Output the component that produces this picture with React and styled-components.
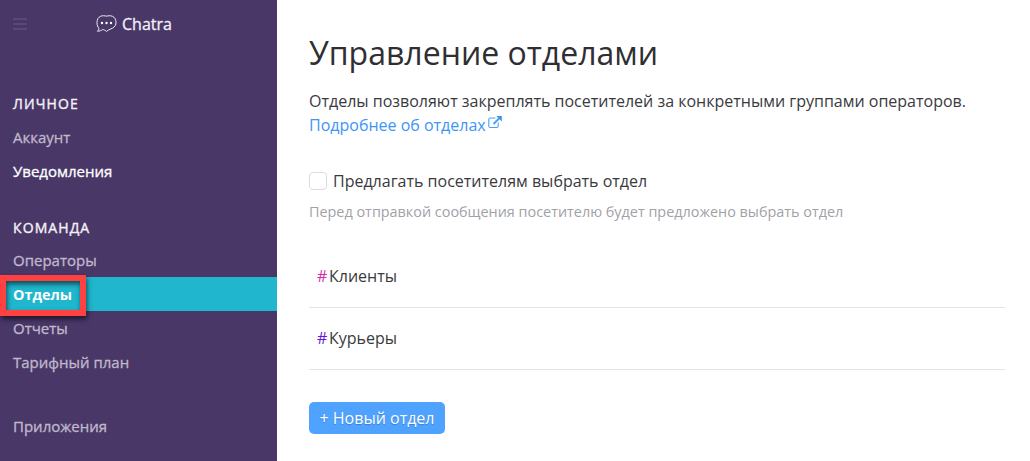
import React from 'react';
import styled, { createGlobalStyle } from 'styled-components';

const GlobalStyle = createGlobalStyle`
  * {
    box-sizing: border-box;
  }

  body {
    margin: 0;
    background: #fff;
    font-family: 'Open Sans', 'Noto Sans', sans-serif;
  }
`;

const Layout = styled.div`
  display: flex;
  height: 461px;
  overflow: hidden;
`;

const Sidebar = styled.aside`
  flex: none;
  width: 277px;
  background: #493768;
  color: #f3f0f6;
`;

const TopBar = styled.header`
  display: flex;
  align-items: center;
  height: 48px;
  padding-left: 13px;
`;

const MenuButton = styled.span`
  display: flex;
  flex-direction: column;
  gap: 3px;
  width: 14px;
  margin-right: 69px;
`;

const MenuLine = styled.i`
  height: 2px;
  background: #5a4876;
`;

const Brand = styled.span`
  margin-left: 5px;
  font-size: 16px;
  line-height: 24px;
  -webkit-text-stroke: 0.3px;
`;

const Group = styled.nav`
  padding-top: ${({ $top }) => $top}px;
`;

const GroupTitle = styled.h2`
  margin: 0;
  padding-left: 13px;
  height: 32.5px;
  font-size: 14px;
  line-height: 34px;
  font-weight: 400;
  letter-spacing: 1.1px;
  -webkit-text-stroke: 0.4px;
`;

const Item = styled.a`
  display: flex;
  align-items: center;
  height: 34px;
  padding-left: 13px;
  font-size: ${({ $active }) => ($active ? 14.4 : 15)}px;
  font-weight: ${({ $active }) => ($active ? 700 : 400)};
  color: ${({ $bright }) => ($bright ? '#fff' : '#c0b8cb')};
  background: ${({ $active }) => ($active ? '#20b6cd' : 'transparent')};
  -webkit-text-stroke: ${({ $active }) => ($active ? 0 : 0.3)}px;
`;

const Marked = styled.span`
  position: relative;
`;

const Highlight = styled.span`
  position: absolute;
  top: -10px;
  left: -13px;
  width: 86px;
  height: 41px;
  border: 6px solid #ff4141;
  box-shadow: 1px 3px 5px rgba(0, 0, 0, 0.6), inset 1px 3px 5px rgba(0, 0, 0, 0.6);
`;

const Main = styled.main`
  flex: 1;
  padding: 30px 25px 0 32px;
  color: #3a3a3e;
  font-size: 16px;
`;

const Title = styled.h1`
  margin: 0;
  font-size: 32px;
  line-height: 46px;
  font-weight: 400;
  color: #2f2f33;
`;

const Intro = styled.p`
  margin: 13px 0 0;
  line-height: 24px;
`;

const Link = styled.a`
  display: flex;
  width: max-content;
  color: #3d95f5;

  svg {
    margin: 3px 0 0 2px;
  }
`;

const CheckRow = styled.label`
  display: flex;
  align-items: center;
  gap: 6px;
  height: 24px;
  margin-top: 32px;
`;

const CheckBox = styled.span`
  width: 18px;
  height: 18px;
  border: 1px solid #dcdcde;
  border-radius: 4px;
`;

const Hint = styled.p`
  margin: 9px 0 0;
  font-size: 14.4px;
  line-height: 20px;
  color: #a1a1a7;
`;

const Departments = styled.div`
  margin-top: 24px;
`;

const Department = styled.div`
  display: flex;
  align-items: center;
  height: 62px;
  padding: 0 0 2px 8px;
  border-bottom: 1px solid #e3e3e4;
`;

const Hash = styled.span`
  width: 12px;
  color: ${({ $color }) => $color};
`;

const AddButton = styled.button`
  width: 136px;
  height: 32px;
  margin-top: 32px;
  padding: 0;
  border: 0;
  border-radius: 5px;
  background: #4fa3ff;
  color: #fff;
  font: 400 16px/32px 'Open Sans', sans-serif;
  text-shadow: 0 1px 1px rgba(0, 60, 130, 0.35);
`;

const personal = [
  { label: 'Аккаунт' },
  { label: 'Уведомления', bright: true },
];

const team = [
  { label: 'Операторы' },
  { label: 'Отделы', bright: true, active: true },
  { label: 'Отчеты' },
  { label: 'Тарифный план' },
];

const departments = [
  { name: 'Клиенты', color: '#d52aa5' },
  { name: 'Курьеры', color: '#6318d5' },
];

function LogoIcon() {
  return (
    <svg width="21" height="18" viewBox="0 0 21 18" fill="none" stroke="#eeeaf2">
      <path d="M10.5 1.2C14 .1 20 .5 20 7.8c0 3.700-3 5.300-5.400 6.200-1.600.6-2.800 1.400-4.100 2.400-1.200-1-2.300-1.700-3.800-1.800-1.400.7-3 1.700-5.300 1.600.9-.8 1.500-1.800 1.500-3C1.700 12 1 10.200 1 7.800 1 .5 7 .1 10.500 1.200z" />
      <g fill="#fff" stroke="none">
        <circle cx="6" cy="8" r="1.2" />
        <circle cx="10.5" cy="8" r="1.2" />
        <circle cx="15" cy="8" r="1.2" />
      </g>
    </svg>
  );
}

function ExternalIcon() {
  return (
    <svg width="14" height="13" viewBox="0 0 14 13" fill="none" stroke="#4c9ff8">
      <path d="M7.500 2H2.200C1.300 2 .8 2.600.8 3.400v6.700c0 .9.600 1.400 1.400 1.400h6.600c.9 0 1.400-.6 1.400-1.400V6.500" strokeWidth="1.1" />
      <path d="M5.500 8L11.500 2" strokeWidth="1.900" />
      <path d="M8.300 0h5.500v5.500z" fill="#3d95f5" stroke="none" />
    </svg>
  );
}

function MenuItem({ label, bright, active }) {
  return (
    <Item $bright={bright} $active={active}>
      {active ? (
        <Marked>
          {label}
          <Highlight />
        </Marked>
      ) : label}
    </Item>
  );
}

function App() {
  return (
    <Layout>
      <GlobalStyle />
      <Sidebar>
        <TopBar>
          <MenuButton>
            <MenuLine />
            <MenuLine />
            <MenuLine />
          </MenuButton>
          <LogoIcon />
          <Brand>Chatra</Brand>
        </TopBar>
        <Group $top={39}>
          <GroupTitle>ЛИЧНОЕ</GroupTitle>
          {personal.map(item => <MenuItem key={item.label} {...item} />)}
        </Group>
        <Group $top={23}>
          <GroupTitle>КОМАНДА</GroupTitle>
          {team.map(item => <MenuItem key={item.label} {...item} />)}
        </Group>
        <Group $top={30}>
          <MenuItem label="Приложения" />
        </Group>
      </Sidebar>
      <Main>
        <Title>Управление отделами</Title>
        <Intro>
          Отделы позволяют закреплять посетителей за конкретными группами операторов.
          <Link>
            Подробнее об отделах
            <ExternalIcon />
          </Link>
        </Intro>
        <CheckRow>
          <CheckBox />
          Предлагать посетителям выбрать отдел
        </CheckRow>
        <Hint>Перед отправкой сообщения посетителю будет предложено выбрать отдел</Hint>
        <Departments>
          {departments.map(({ name, color }) => (
            <Department key={name}>
              <Hash $color={color}>#</Hash>
              {name}
            </Department>
          ))}
        </Departments>
        <AddButton>+ Новый отдел</AddButton>
      </Main>
    </Layout>
  );
}

export default App;
